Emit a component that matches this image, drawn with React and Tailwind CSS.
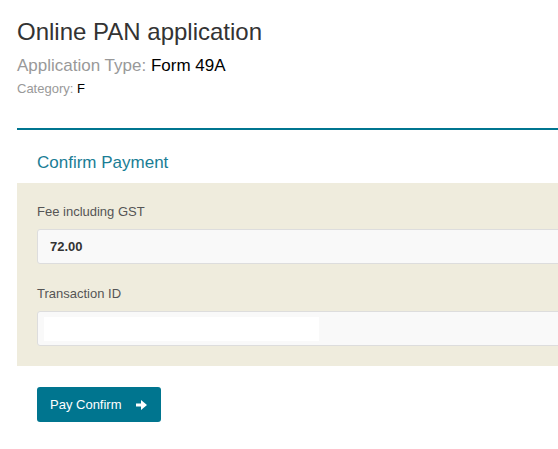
import React from "react";

const ArrowIcon = () => (
  <svg width="11" height="10" viewBox="0 0 11 10" className="ml-[14px]">
    <path d="M0 3.5h5V0l6 5-6 5V6.5H0z" fill="#fff" />
  </svg>
);

export default function App() {
  return (
    <div className="w-[558px] h-[449px] overflow-hidden bg-white" style={{ fontFamily: '"Liberation Sans", Arial, sans-serif' }}>
      <div className="w-[620px] pl-[17px] pt-[18px]">
        <h1 className="text-[24px] leading-[28px] text-[#333]">Online PAN application</h1>
        <div className="mt-[10px] text-[17px] leading-[20px] text-[#999]">
          Application Type: <span className="text-black">Form 49A</span>
        </div>
        <div className="mt-[5px] text-[13px] leading-[16px] text-[#999]">
          Category: <span className="text-black">F</span>
        </div>
        <div className="mt-[31px] h-[2px] bg-[#007590]" />
        <div className="pl-[20px] pt-[23px] pb-[10px] text-[17px] leading-[20px] text-[#1a7d95]">Confirm Payment</div>
        <div className="bg-[#efecdd] px-[20px] pt-[21px] pb-[20px]">
          <div className="text-[13px] leading-[16px] text-[#555]">Fee including GST</div>
          <div className="mt-[9px] h-[35px] border border-[#ddd] rounded-[3px] bg-[#f9f9f9] flex items-center pl-[12px] text-[13px] font-bold text-[#333]">
            72.00
          </div>
          <div className="mt-[22px] text-[13px] leading-[16px] text-[#555]">Transaction ID</div>
          <div className="mt-[9px] h-[35px] border border-[#ddd] rounded-[3px] bg-[#f9f9f9] flex items-center pl-[6px]">
            <div className="w-[275px] h-[24px] bg-white" />
          </div>
        </div>
        <div className="pl-[20px] pt-[21px]">
          <button className="h-[35px] pl-[13px] pr-[14px] bg-[#00758f] rounded-[3px] text-white text-[13px] flex items-center">
            Pay Confirm
            <ArrowIcon />
          </button>
        </div>
      </div>
    </div>
  );
}
